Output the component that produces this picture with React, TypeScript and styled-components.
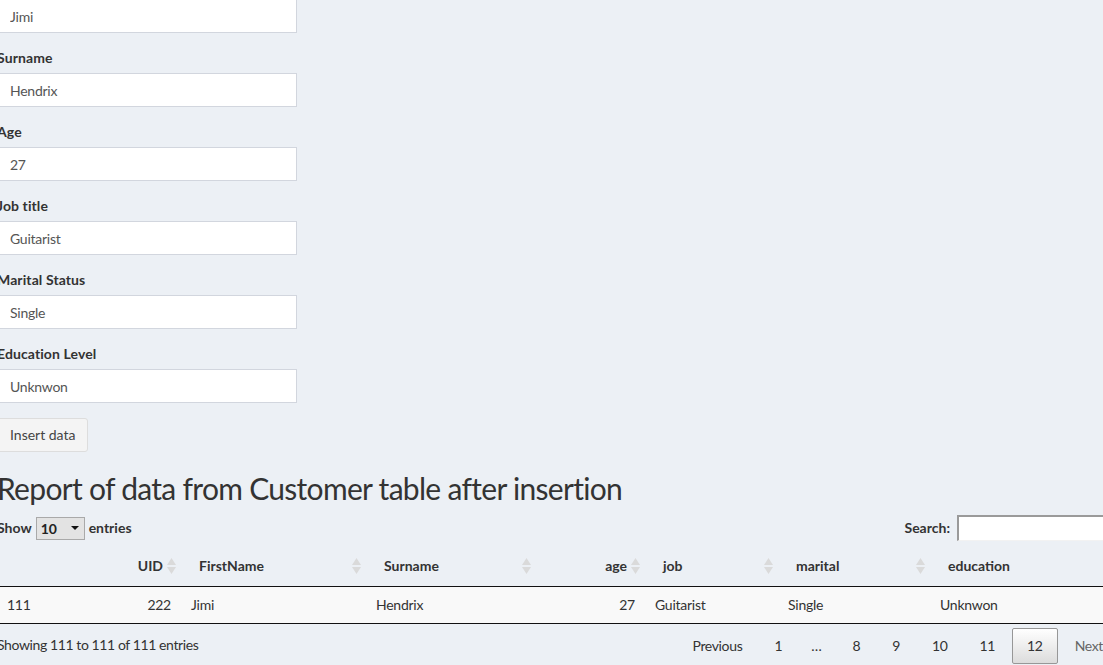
import React from "react";
import styled, { createGlobalStyle } from "styled-components";

const Global = createGlobalStyle`
  html, body {
    margin: 0;
    padding: 0;
    background: #ecf0f5;
    overflow: hidden;
  }
  body {
    font-family: Lato, "Open Sans", sans-serif;
    font-size: 14px;
    line-height: 20px;
    letter-spacing: -0.25px;
    color: #333;
  }
  * { box-sizing: border-box; }
`;

const Page = styled.div`
  margin: -26px 0 0 -3px;
  width: 1121px;
`;

const FormGroup = styled.div`
  margin-bottom: 15px;
`;

const Label = styled.label`
  display: block;
  font-weight: 700;
  letter-spacing: 0.1px;
  margin-bottom: 5px;
  color: #333;
`;

const TextInput = styled.input`
  display: block;
  width: 300px;
  height: 34px;
  padding: 6px 12px;
  border: 1px solid #d2d6de;
  border-radius: 0;
  background: #fff;
  color: #555;
  font: inherit;
  letter-spacing: inherit;
  outline: none;
`;

const Button = styled.button`
  display: inline-block;
  height: 34px;
  padding: 6px 12px;
  border: 1px solid #ddd;
  border-radius: 3px;
  background: #f4f4f4;
  color: #444;
  font: inherit;
  letter-spacing: 0;
`;

const Heading = styled.h2`
  font-size: 30px;
  font-weight: 400;
  line-height: 1.1;
  letter-spacing: -0.7px;
  margin: 20px 0 10px;
  color: #333;
`;

const TopBar = styled.div`
  display: flex;
  justify-content: space-between;
  align-items: center;
  height: 26px;
  margin-bottom: 5px;
`;

const LengthLabel = styled.label`
  display: inline-flex;
  align-items: center;
  gap: 4px;
  font-weight: 700;
  letter-spacing: 0;
`;

const SelectBox = styled.div`
  position: relative;
  width: 49px;
  height: 23px;
  border: 1px solid #a9a9a9;
  background: #e3e3e3;
  padding: 0 4px;
  font-weight: 700;
  line-height: 21px;
  color: #222;
`;

const SelectArrow = styled.span`
  position: absolute;
  right: 5px;
  top: 8px;
  width: 0;
  height: 0;
  border-left: 4px solid transparent;
  border-right: 4px solid transparent;
  border-top: 4px solid #111;
`;

const FilterLabel = styled.label`
  display: inline-flex;
  align-items: center;
  font-weight: 700;
  letter-spacing: 0;
`;

const SearchInput = styled.input`
  width: 161px;
  height: 26px;
  margin-left: 7px;
  padding: 1px 2px;
  border-style: solid;
  border-width: 2px 1px 1px 2px;
  border-color: #9a9a9a #f2f2f2 #f2f2f2 #9a9a9a;
  background: #fff;
  font: inherit;
  outline: none;
`;

const Table = styled.table`
  width: 1121px;
  table-layout: fixed;
  border-collapse: separate;
  border-spacing: 0;
  border-bottom: 1px solid #111;
`;

const Th = styled.th<{ $right?: boolean }>`
  position: relative;
  padding: 10px 18px;
  font-weight: 700;
  letter-spacing: 0;
  text-align: ${(p) => (p.$right ? "right" : "left")};
  border-bottom: 1px solid #111;
  color: #333;
  white-space: nowrap;
`;

const SortIcon = styled.svg`
  position: absolute;
  right: 5px;
  top: 12px;
`;

const Td = styled.td<{ $right?: boolean }>`
  padding: 8px 10px;
  background: #f9f9f9;
  text-align: ${(p) => (p.$right ? "right" : "left")};
  color: #333;
`;

const Footer = styled.div`
  display: flex;
  justify-content: space-between;
  align-items: flex-start;
`;

const Info = styled.div`
  padding-top: 10.5px;
  letter-spacing: -0.4px;
`;

const Paginate = styled.div`
  display: flex;
  align-items: center;
  padding-top: 3.5px;
`;

const PageButton = styled.span<{ $current?: boolean; $disabled?: boolean }>`
  display: inline-block;
  min-width: 1.5em;
  padding: 7px 14px;
  margin-left: 2px;
  text-align: center;
  letter-spacing: -0.35px;
  border: 1px solid ${(p) => (p.$current ? "#979797" : "transparent")};
  border-radius: 2px;
  background: ${(p) =>
    p.$current ? "linear-gradient(to bottom, #fff 0%, #dcdcdc 100%)" : "transparent"};
  color: ${(p) => (p.$disabled ? "#666" : "#333")};
`;

const Ellipsis = styled.span`
  padding: 0 1em;
`;

const Sort = () => (
  <SortIcon width="9" height="16" viewBox="0 0 9 16">
    <polygon points="4.5,0 9,7 0,7" fill="#dadada" />
    <polygon points="0,9 9,9 4.5,16" fill="#dadada" />
  </SortIcon>
);

const fields: [string, string][] = [
  ["First name", "Jimi"],
  ["Surname", "Hendrix"],
  ["Age", "27"],
  ["Job title", "Guitarist"],
  ["Marital Status", "Single"],
  ["Education Level", "Unknwon"],
];

const columns: { name: string; width: number; right?: boolean; sortable: boolean }[] = [
  { name: "", width: 103, sortable: false },
  { name: "UID", width: 81, right: true, sortable: true },
  { name: "FirstName", width: 185, sortable: true },
  { name: "Surname", width: 170, sortable: true },
  { name: "age", width: 109, right: true, sortable: true },
  { name: "job", width: 133, sortable: true },
  { name: "marital", width: 152, sortable: true },
  { name: "education", width: 188, sortable: true },
];

const row = ["111", "222", "Jimi", "Hendrix", "27", "Guitarist", "Single", "Unknwon"];

export default function App() {
  return (
    <>
      <Global />
      <Page>
        {fields.map(([label, value]) => (
          <FormGroup key={label}>
            <Label>{label}</Label>
            <TextInput defaultValue={value} />
          </FormGroup>
        ))}
        <div>
          <Button>Insert data</Button>
        </div>
        <Heading>Report of data from Customer table after insertion</Heading>
        <TopBar>
          <LengthLabel>
            Show
            <SelectBox>
              10
              <SelectArrow />
            </SelectBox>
            entries
          </LengthLabel>
          <FilterLabel>
            Search:
            <SearchInput />
          </FilterLabel>
        </TopBar>
        <Table>
          <colgroup>
            {columns.map((c, i) => (
              <col key={i} style={{ width: c.width }} />
            ))}
          </colgroup>
          <thead>
            <tr>
              {columns.map((c, i) => (
                <Th key={i} $right={c.right}>
                  {c.name}
                  {c.sortable && <Sort />}
                </Th>
              ))}
            </tr>
          </thead>
          <tbody>
            <tr>
              {row.map((v, i) => (
                <Td key={i} $right={columns[i].right}>
                  {v}
                </Td>
              ))}
            </tr>
          </tbody>
        </Table>
        <Footer>
          <Info>Showing 111 to 111 of 111 entries</Info>
          <Paginate>
            <PageButton>Previous</PageButton>
            <PageButton>1</PageButton>
            <Ellipsis>…</Ellipsis>
            <PageButton>8</PageButton>
            <PageButton>9</PageButton>
            <PageButton>10</PageButton>
            <PageButton>11</PageButton>
            <PageButton $current>12</PageButton>
            <PageButton $disabled>Next</PageButton>
          </Paginate>
        </Footer>
      </Page>
    </>
  );
}
